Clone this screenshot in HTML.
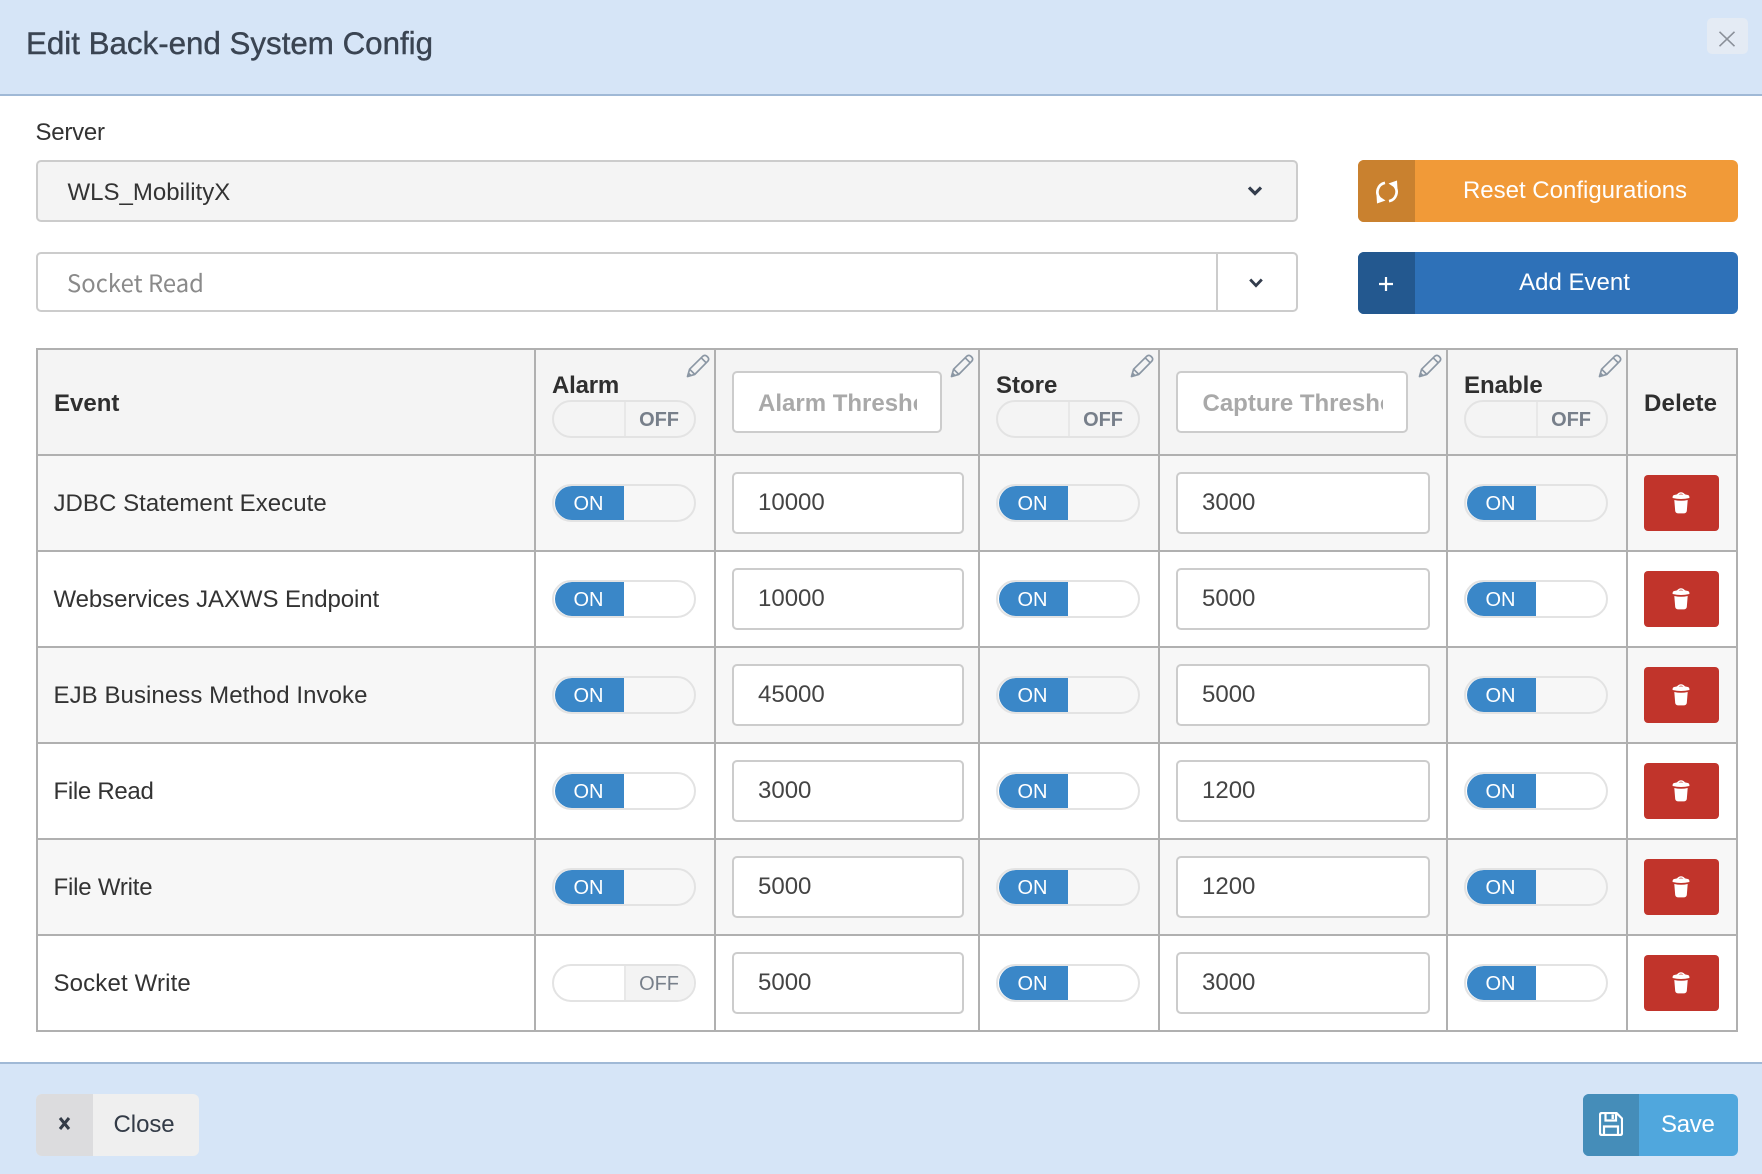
<!DOCTYPE html>
<html lang="en">
<head>
<meta charset="utf-8">
<title>Edit Back-end System Config</title>
<style>
html,body{margin:0;padding:0;background:#fff;}
body{position:relative;width:1762px;height:1174px;overflow:hidden;font-family:"Liberation Sans",Arial,sans-serif;font-size:24px;color:#333;}
div,span,svg{position:absolute;box-sizing:border-box;}
.t{white-space:nowrap;height:40px;line-height:40px;}
.hl{font-weight:bold;color:#2f2f2f;}
.box{border:2px solid #ccc;border-radius:5px;background:#fff;}
.btn{border-radius:6px;overflow:hidden;}
.row{left:38px;width:1698px;height:94px;}
.row.alt{background:#f7f7f7;}
.lb{left:15.5px;top:28px;}
.tg{width:144px;height:38px;border:2px solid #e3e3e3;border-radius:19px;overflow:hidden;}
.tg .on{left:1px;top:0;width:69px;height:34px;padding:1px 2px 0 0;background:#3a87c8;border-radius:17px 0 0 17px;color:#fff;font-size:20px;line-height:34px;text-align:center;}
.tg .dv{left:70px;top:0;width:2px;height:34px;background:#e8e8e8;}
.tg .off{left:72px;top:0;width:68px;height:34px;padding:1px 2px 0 0;font-size:20px;line-height:34px;text-align:center;color:#777f8a;letter-spacing:-.1px;}
.tg .off.b{font-weight:bold;}
.tg .off.g{background:#f3f3f3;}
.inp{top:16px;height:62px;}
.a{left:694px;width:232px;}
.c{left:1138px;width:254px;}
.val{top:27px;color:#444;}
.va{left:720px;}
.vc{left:1164px;}
.del{left:1606px;top:19px;width:75px;height:56px;background:#c1342b;border-radius:4px;}
.pen{top:354px;width:24px;height:24px;}
.vl{top:348px;width:2px;height:684px;background:#b0b0b0;}
.hline{left:36px;width:1702px;height:2px;background:#b0b0b0;}
</style>
</head>
<body>
<svg width="0" height="0" style="left:0;top:0">
<symbol id="pencil" viewBox="0 0 24 24"><path d="M1.5 22.5 L3.6 15.2 L16.8 2.2 Q18.8 .6 20.6 2 L22 3.4 Q23.4 5.2 21.8 7.2 L8.8 20.4 Z M15.2 3.8 L20.2 8.8 M3.6 15.2 L8.8 20.4" fill="none" stroke="#8b97a4" stroke-width="1.7" stroke-linejoin="round"/><path d="M1.5 22.5 L2.8 18.2 L5.8 21.2 Z" fill="#8b97a4"/></symbol>
<symbol id="trash" viewBox="0 0 18 23"><path fill-rule="evenodd" d="M.6 6 Q.6 4 3.4 3.8 L5 3.4 Q9-.8 13 3.4 L14.6 3.8 Q17.4 4 17.4 6 L17.4 7 Q9 9 .6 7 Z M6.6 3.6 Q9 1.6 11.4 3.6 Q9 3.2 6.6 3.6 Z" fill="#fff"/><path d="M2.3 9 Q9 10.6 15.7 9 L14.8 20 Q14.4 22.4 11.6 22.4 L6.4 22.4 Q3.6 22.4 3.2 20 Z" fill="#fff"/></symbol>
</svg>

<!-- header -->
<div style="left:0;top:0;width:1762px;height:96px;background:#d6e5f7;border-bottom:2px solid #a0b9d6;"></div>
<div class="t" style="left:26px;top:24px;font-size:31.3px;color:#3a4452;-webkit-text-stroke:.4px #3a4452;">Edit Back-end System Config</div>
<div style="left:1707px;top:18px;width:41px;height:36px;background:#e4ebf4;border-radius:5px;"></div>
<svg style="left:1718px;top:31px" width="18" height="16" viewBox="0 0 18 16"><path d="M1.5 .8 L16.5 15.2 M16.5 .8 L1.5 15.2" stroke="#8a9099" stroke-width="1.6" fill="none"/></svg>

<!-- form -->
<div class="t" style="left:35.5px;top:112.5px;color:#333;letter-spacing:-.25px;">Server</div>

<div class="box" style="left:36px;top:160px;width:1262px;height:62px;background:#f4f4f4;"></div>
<div class="t" style="left:67.5px;top:172.5px;color:#333;">WLS_MobilityX</div>
<svg style="left:1247px;top:185px" width="16" height="12" viewBox="0 0 16 12"><path d="M2 2.5 L8 8.5 L14 2.5" stroke="#333c4c" stroke-width="3.2" fill="none"/></svg>

<div class="box" style="left:36px;top:252px;width:1262px;height:60px;"></div>
<div style="left:1216px;top:254px;width:2px;height:56px;background:#ccc;"></div>
<div class="t" style="left:67px;top:262px;font-family:'Noto Sans CJK JP','Liberation Sans',sans-serif;color:#8a8a8a;font-size:23.8px;letter-spacing:.05px;">Socket Read</div>
<svg style="left:1248px;top:277px" width="16" height="12" viewBox="0 0 16 12"><path d="M2.2 2.5 L8 8.6 L13.8 2.5" stroke="#333c4c" stroke-width="2.8" fill="none"/></svg>

<!-- action buttons -->
<div class="btn" style="left:1358px;top:160px;width:380px;height:62px;background:#f19a38;">
  <div style="left:0;top:0;width:57px;height:62px;background:#c9812f;"></div>
</div>
<svg style="left:1374.5px;top:180px" width="24" height="24" viewBox="0 0 24 24"><path d="M10 2.8 A9.5 9.5 0 0 0 4.8 18.4 M14 21.2 A9.5 9.5 0 0 0 19.2 5.6" stroke="#fff" stroke-width="2.7" fill="none"/><path d="M1.5 14.5 L10.5 20.5 L2 23.5 Z M22.5 9.5 L13.5 3.5 L22 .5 Z" fill="#fff"/></svg>
<div class="t" style="left:1413.5px;top:170.5px;width:323px;text-align:center;color:#fff;">Reset Configurations</div>

<div class="btn" style="left:1358px;top:252px;width:380px;height:62px;background:#2e71b8;">
  <div style="left:0;top:0;width:57px;height:62px;background:#23588f;"></div>
</div>
<svg style="left:1379px;top:277px" width="14" height="14" viewBox="0 0 14 14"><path d="M7 0 V14 M0 7 H14" stroke="#fff" stroke-width="2.2" fill="none"/></svg>
<div class="t" style="left:1413px;top:262.5px;width:323px;text-align:center;color:#fff;">Add Event</div>

<!-- table header background -->
<div style="left:38px;top:350px;width:1698px;height:104px;background:#f4f4f4;"></div>

<!-- rows -->
<div class="row alt" style="top:456px;">
  <div class="t lb" style="letter-spacing:.05px;">JDBC Statement Execute</div>
  <div class="tg" style="left:514px;top:28px;"><div class="on">ON</div></div>
  <div class="box inp a"></div><div class="t val va">10000</div>
  <div class="tg" style="left:958px;top:28px;"><div class="on">ON</div></div>
  <div class="box inp c"></div><div class="t val vc">3000</div>
  <div class="tg" style="left:1426px;top:28px;"><div class="on">ON</div></div>
  <div class="del"><svg style="left:28px;top:16px" width="18" height="23"><use href="#trash"/></svg></div>
</div>
<div class="row" style="top:552px;">
  <div class="t lb" style="letter-spacing:-.08px;">Webservices JAXWS Endpoint</div>
  <div class="tg" style="left:514px;top:28px;"><div class="on">ON</div></div>
  <div class="box inp a"></div><div class="t val va">10000</div>
  <div class="tg" style="left:958px;top:28px;"><div class="on">ON</div></div>
  <div class="box inp c"></div><div class="t val vc">5000</div>
  <div class="tg" style="left:1426px;top:28px;"><div class="on">ON</div></div>
  <div class="del"><svg style="left:28px;top:16px" width="18" height="23"><use href="#trash"/></svg></div>
</div>
<div class="row alt" style="top:648px;">
  <div class="t lb" style="letter-spacing:.07px;">EJB Business Method Invoke</div>
  <div class="tg" style="left:514px;top:28px;"><div class="on">ON</div></div>
  <div class="box inp a"></div><div class="t val va">45000</div>
  <div class="tg" style="left:958px;top:28px;"><div class="on">ON</div></div>
  <div class="box inp c"></div><div class="t val vc">5000</div>
  <div class="tg" style="left:1426px;top:28px;"><div class="on">ON</div></div>
  <div class="del"><svg style="left:28px;top:16px" width="18" height="23"><use href="#trash"/></svg></div>
</div>
<div class="row" style="top:744px;">
  <div class="t lb" style="letter-spacing:-.3px;">File Read</div>
  <div class="tg" style="left:514px;top:28px;"><div class="on">ON</div></div>
  <div class="box inp a"></div><div class="t val va">3000</div>
  <div class="tg" style="left:958px;top:28px;"><div class="on">ON</div></div>
  <div class="box inp c"></div><div class="t val vc">1200</div>
  <div class="tg" style="left:1426px;top:28px;"><div class="on">ON</div></div>
  <div class="del"><svg style="left:28px;top:16px" width="18" height="23"><use href="#trash"/></svg></div>
</div>
<div class="row alt" style="top:840px;">
  <div class="t lb" style="letter-spacing:-.2px;">File Write</div>
  <div class="tg" style="left:514px;top:28px;"><div class="on">ON</div></div>
  <div class="box inp a"></div><div class="t val va">5000</div>
  <div class="tg" style="left:958px;top:28px;"><div class="on">ON</div></div>
  <div class="box inp c"></div><div class="t val vc">1200</div>
  <div class="tg" style="left:1426px;top:28px;"><div class="on">ON</div></div>
  <div class="del"><svg style="left:28px;top:16px" width="18" height="23"><use href="#trash"/></svg></div>
</div>
<div class="row" style="top:936px;">
  <div class="t lb" style="letter-spacing:.15px;">Socket Write</div>
  <div class="tg" style="left:514px;top:28px;"><div class="dv"></div><div class="off g">OFF</div></div>
  <div class="box inp a"></div><div class="t val va">5000</div>
  <div class="tg" style="left:958px;top:28px;"><div class="on">ON</div></div>
  <div class="box inp c"></div><div class="t val vc">3000</div>
  <div class="tg" style="left:1426px;top:28px;"><div class="on">ON</div></div>
  <div class="del"><svg style="left:28px;top:16px" width="18" height="23"><use href="#trash"/></svg></div>
</div>

<!-- grid lines -->
<div class="hline" style="top:348px;"></div>
<div class="hline" style="top:454px;"></div>
<div class="hline" style="top:550px;"></div>
<div class="hline" style="top:646px;"></div>
<div class="hline" style="top:742px;"></div>
<div class="hline" style="top:838px;"></div>
<div class="hline" style="top:934px;"></div>
<div class="hline" style="top:1030px;"></div>
<div class="vl" style="left:36px;"></div>
<div class="vl" style="left:534px;"></div>
<div class="vl" style="left:714px;"></div>
<div class="vl" style="left:978px;"></div>
<div class="vl" style="left:1158px;"></div>
<div class="vl" style="left:1446px;"></div>
<div class="vl" style="left:1626px;"></div>
<div class="vl" style="left:1736px;"></div>

<!-- table header content -->
<div class="t hl" style="left:54px;top:384px;">Event</div>

<div class="t hl" style="left:552px;top:366px;letter-spacing:-.2px;">Alarm</div>
<div class="tg" style="left:552px;top:400px;"><div class="dv"></div><div class="off b">OFF</div></div>
<svg class="pen" style="left:686px;"><use href="#pencil"/></svg>

<div class="box" style="left:732px;top:371px;width:210px;height:62px;"></div>
<div class="t hl" style="left:758px;top:384px;width:159px;overflow:hidden;color:#a9a9a9;">Alarm Threshold</div>
<svg class="pen" style="left:950px;"><use href="#pencil"/></svg>

<div class="t hl" style="left:996px;top:366px;">Store</div>
<div class="tg" style="left:996px;top:400px;"><div class="dv"></div><div class="off b">OFF</div></div>
<svg class="pen" style="left:1130px;"><use href="#pencil"/></svg>

<div class="box" style="left:1176px;top:371px;width:232px;height:62px;"></div>
<div class="t hl" style="left:1202.5px;top:384px;width:180px;overflow:hidden;color:#a9a9a9;">Capture Threshold</div>
<svg class="pen" style="left:1418px;"><use href="#pencil"/></svg>

<div class="t hl" style="left:1464px;top:366px;">Enable</div>
<div class="tg" style="left:1464px;top:400px;"><div class="dv"></div><div class="off b">OFF</div></div>
<svg class="pen" style="left:1598px;"><use href="#pencil"/></svg>

<div class="t hl" style="left:1644px;top:384px;letter-spacing:.2px;">Delete</div>

<!-- footer -->
<div style="left:0;top:1062px;width:1762px;height:112px;background:#d6e5f7;border-top:2px solid #a0b9d6;"></div>
<div class="btn" style="left:36px;top:1094px;width:163px;height:62px;background:#efefef;">
  <div style="left:0;top:0;width:57px;height:62px;background:#dcdcde;"></div>
</div>
<svg style="left:58px;top:1116.5px" width="13" height="13" viewBox="0 0 13 13"><path d="M2 1 L11 12 M11 1 L2 12" stroke="#333b47" stroke-width="3" fill="none"/></svg>
<div class="t" style="left:113.5px;top:1105px;color:#333b47;letter-spacing:-.05px;">Close</div>

<div class="btn" style="left:1583px;top:1094px;width:155px;height:62px;background:#50a7dd;">
  <div style="left:0;top:0;width:56px;height:62px;background:#458db9;"></div>
</div>
<svg style="left:1599px;top:1111.5px" width="24" height="24" viewBox="0 0 24 24"><path d="M3 1 H17.5 L23 6.5 V21 Q23 23 21 23 H3 Q1 23 1 21 V3 Q1 1 3 1 Z M6.5 1 V8.5 H17 V1 M5 23 V14.5 H19 V23" stroke="#fff" stroke-width="2.2" fill="none"/><rect x="12.5" y="2.5" width="2.4" height="4.5" fill="#fff"/></svg>
<div class="t" style="left:1661px;top:1105px;color:#fff;letter-spacing:-.3px;">Save</div>
</body>
</html>
